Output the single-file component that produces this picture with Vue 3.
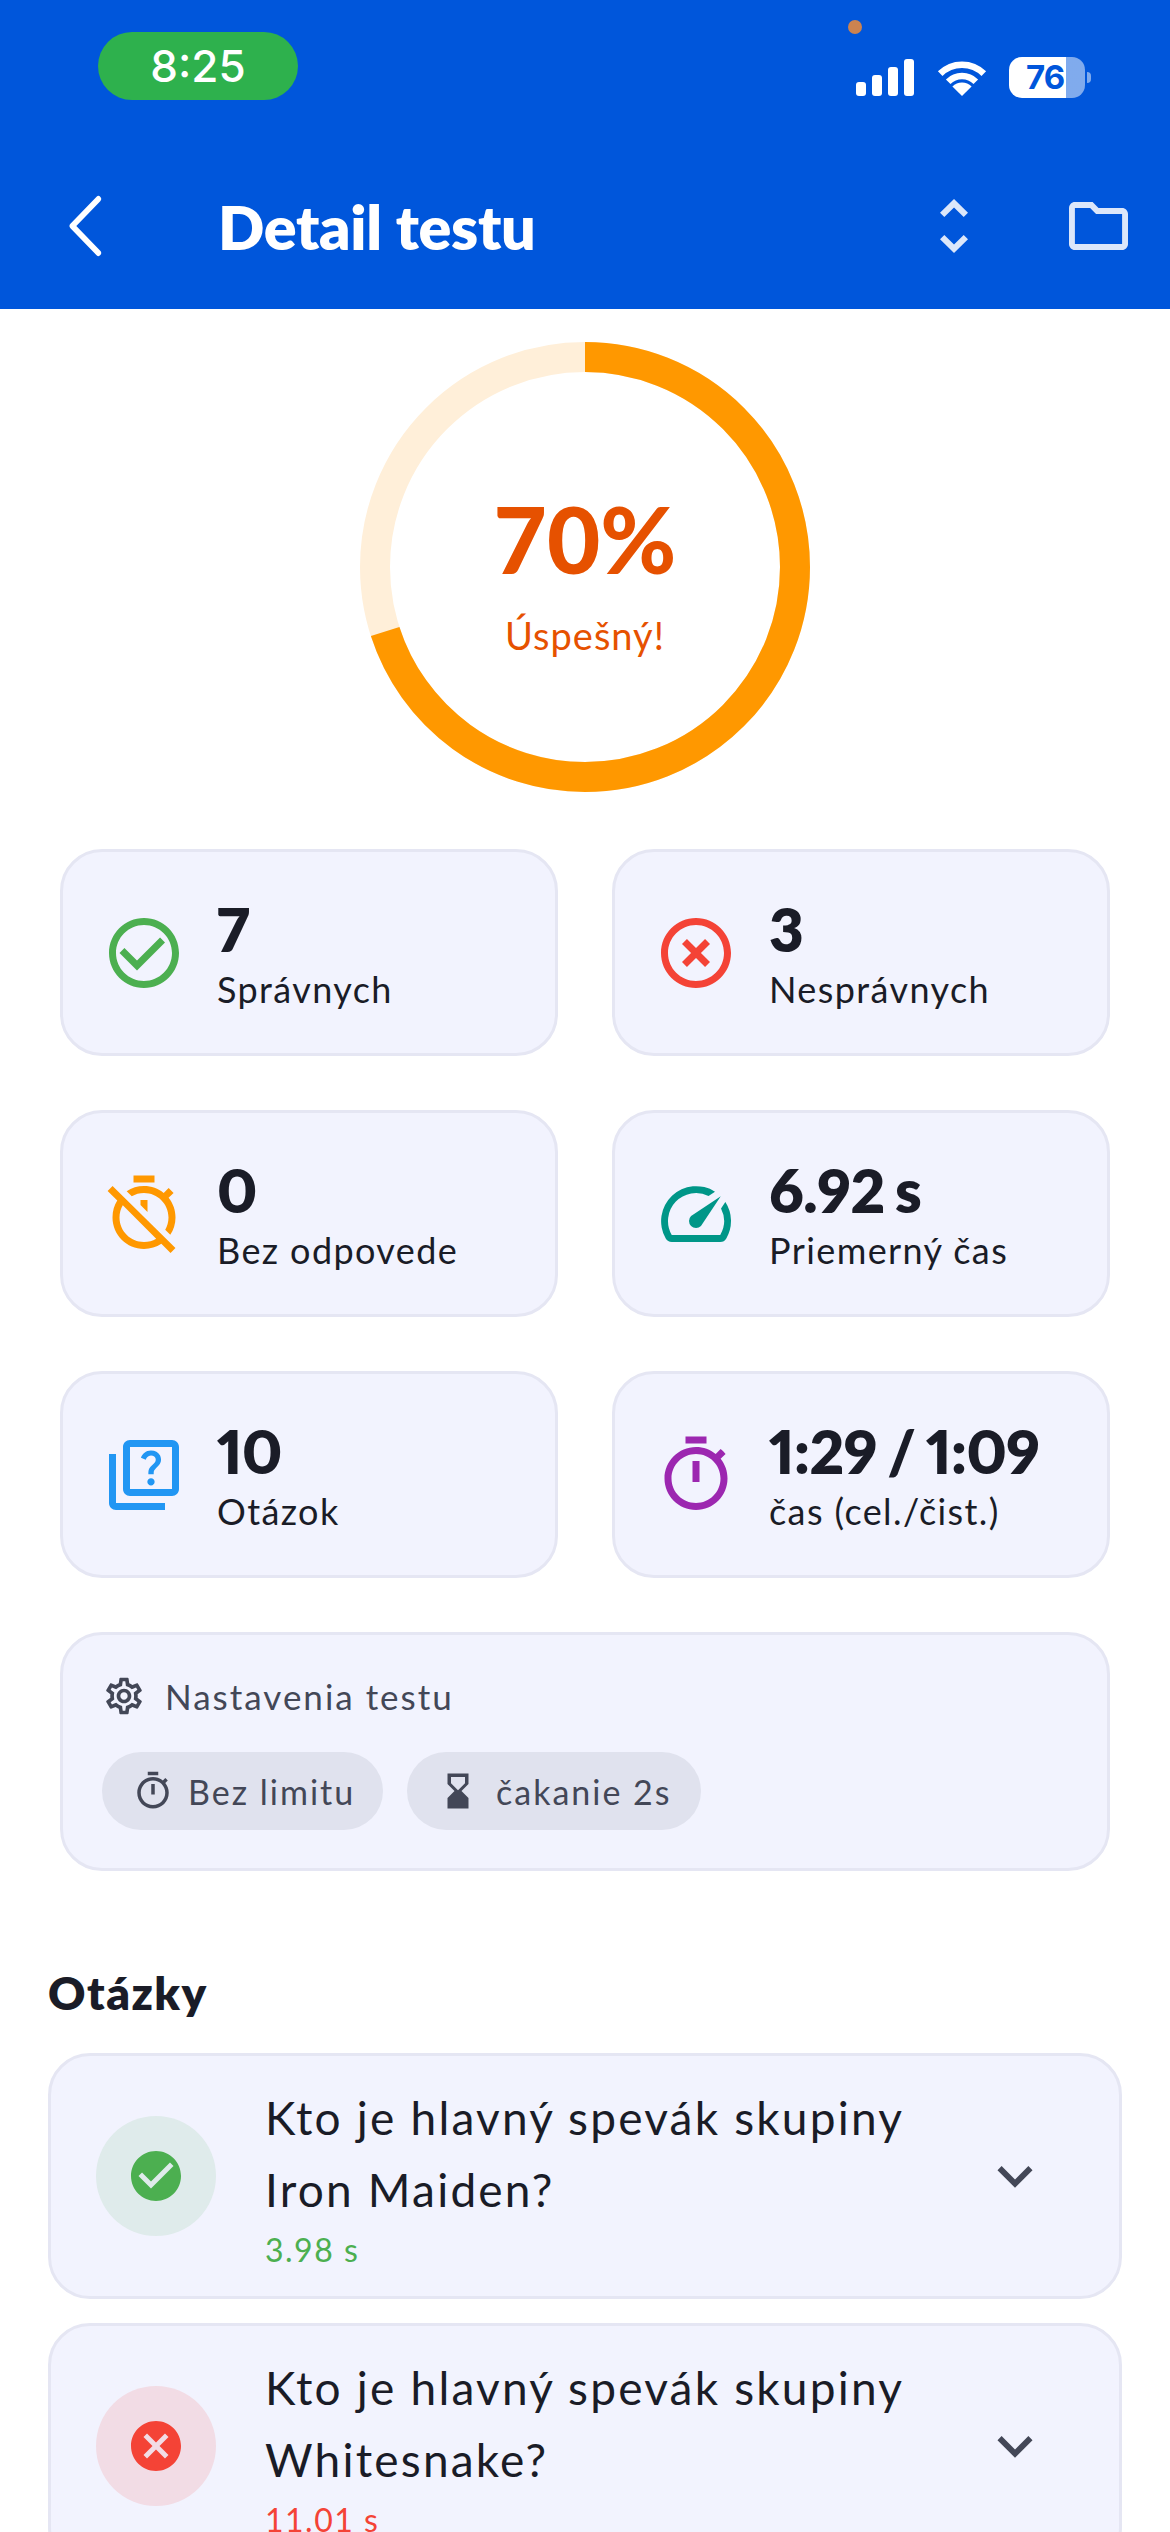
<script setup>
const ringRadius = 210;
const ringLength = 2 * Math.PI * ringRadius;
const ringDash = `${ringLength * 0.7} ${ringLength}`;

const stats = [
  {
    value: "7",
    label: "Správnych",
    color: "#4caf50",
    icon: "M16.59 7.58 10 14.17l-3.59-3.58L5 12l5 5 8-8zM12 2C6.48 2 2 6.48 2 12s4.48 10 10 10 10-4.48 10-10S17.52 2 12 2zm0 18c-4.42 0-8-3.58-8-8s3.58-8 8-8 8 3.58 8 8-3.58 8-8 8z",
  },
  {
    value: "3",
    label: "Nesprávnych",
    color: "#f44336",
    icon: "M14.59 8 12 10.59 9.41 8 8 9.41 10.59 12 8 14.59 9.41 16 12 13.41 14.59 16 16 14.59 13.41 12 16 9.41 14.59 8zM12 2C6.47 2 2 6.47 2 12s4.47 10 10 10 10-4.47 10-10S17.53 2 12 2zm0 18c-4.41 0-8-3.59-8-8s3.59-8 8-8 8 3.59 8 8-3.59 8-8 8z",
  },
  {
    value: "0",
    label: "Bez odpovede",
    color: "#ff9800",
    icon: "m19.04 4.55-1.42 1.42C16.07 4.74 14.12 4 12 4c-1.83 0-3.53.55-4.95 1.48l1.46 1.46C9.53 6.35 10.73 6 12 6c3.87 0 7 3.13 7 7 0 1.27-.35 2.47-.94 3.49l1.45 1.45C20.45 16.53 21 14.83 21 13c0-2.12-.74-4.07-1.97-5.61l1.42-1.42-1.41-1.42zM15 1H9v2h6V1zm-4 8.44 2 2V8h-2v1.44zM3.02 4 1.61 5.41l2.75 2.75C3.5 9.49 3 11.18 3 13c0 4.97 4.03 9 9 9 1.83 0 3.53-.55 4.95-1.48l2.63 2.63 1.41-1.41L3.02 4zM12 20c-3.87 0-7-3.13-7-7 0-1.27.35-2.47.94-3.49l9.54 9.54C14.47 19.65 13.27 20 12 20z",
  },
  {
    value: "6.92 s",
    label: "Priemerný čas",
    color: "#009688",
    icon: "m20.38 8.57-1.23 1.85a8 8 0 0 1-.22 7.58H5.07A8 8 0 0 1 15.58 6.85l1.85-1.23A10 10 0 0 0 3.35 19a2 2 0 0 0 1.72 1h13.85a2 2 0 0 0 1.74-1 10 10 0 0 0-.27-10.44zm-9.79 6.84a2 2 0 0 0 2.83 0l5.66-8.49-8.49 5.66a2 2 0 0 0 0 2.83z",
  },
  {
    value: "10",
    label: "Otázok",
    color: "#2196f3",
    icon: "M4 6H2v14c0 1.1.9 2 2 2h14v-2H4V6zm16-4H8c-1.1 0-2 .9-2 2v12c0 1.1.9 2 2 2h12c1.1 0 2-.9 2-2V4c0-1.1-.9-2-2-2zm0 14H8V4h12v12zm-6.49-5.84c.41-.73 1.18-1.16 1.63-1.8.48-.68.21-1.94-1.14-1.94-.88 0-1.32.67-1.5 1.23l-1.37-.57C11.51 5.96 12.52 5 13.99 5c1.23 0 2.08.56 2.51 1.26.37.6.58 1.73.01 2.57-.63.93-1.23 1.21-1.56 1.81-.13.24-.18.4-.18 1.18h-1.52c.01-.41-.06-1.08.26-1.66zm-.56 3.79c0-.59.47-1.04 1.05-1.04.59 0 1.04.45 1.04 1.04 0 .58-.44 1.05-1.04 1.05-.58 0-1.05-.47-1.05-1.05z",
  },
  {
    value: "1:29 / 1:09",
    label: "čas (cel./čist.)",
    color: "#9c27b0",
    icon: "M15 1H9v2h6V1zm-4 13h2V8h-2v6zm8.03-6.61 1.42-1.42c-.43-.51-.9-.99-1.41-1.41l-1.42 1.42C16.07 4.74 14.12 4 12 4c-4.97 0-9 4.03-9 9s4.02 9 9 9 9-4.03 9-9c0-2.12-.74-4.07-1.97-5.61zM12 20c-3.87 0-7-3.13-7-7s3.13-7 7-7 7 3.13 7 7-3.13 7-7 7z",
  },
];

const questions = [
  { lines: ["Kto je hlavný spevák skupiny", "Iron Maiden?"], time: "3.98 s", ok: true },
  { lines: ["Kto je hlavný spevák skupiny", "Whitesnake?"], time: "11.01 s", ok: false },
];

const checkPath =
  "M12 2C6.48 2 2 6.48 2 12s4.48 10 10 10 10-4.48 10-10S17.52 2 12 2zm-2 15-5-5 1.41-1.41L10 14.17l7.59-7.59L19 8l-9 9z";
const crossPath =
  "M12 2C6.47 2 2 6.47 2 12s4.47 10 10 10 10-4.47 10-10S17.53 2 12 2zm5 13.59L15.59 17 12 13.41 8.41 17 7 15.59 10.59 12 7 8.41 8.41 7 12 10.59 15.59 7 17 8.41 13.41 12 17 15.59z";
</script>

<template>
  <div class="page">
    <header class="header">
      <div class="status">
        <div class="clock">8:25</div>
        <span class="mic-dot"></span>
        <div class="status-icons">
          <div class="bars">
            <span class="bar bar1"></span>
            <span class="bar bar2"></span>
            <span class="bar bar3"></span>
            <span class="bar bar4"></span>
          </div>
          <svg class="wifi" width="50" height="37" viewBox="0 0 50 37">
            <path d="M3.2 14.6a31 31 0 0 1 43.6 0" fill="none" stroke="#fff" stroke-width="6.5" />
            <path d="M11.2 22.8a19.6 19.6 0 0 1 27.6 0" fill="none" stroke="#fff" stroke-width="6.5" />
            <path d="M25 37 15.4 27.4a13.6 13.6 0 0 1 19.2 0Z" fill="#fff" />
          </svg>
          <div class="battery">
            <div class="battery-body">76</div>
            <span class="battery-nub"></span>
          </div>
        </div>
      </div>
      <nav class="nav">
        <svg class="back" width="40" height="62" viewBox="0 0 40 62">
          <path d="M36 4 7 31l29 27" fill="none" stroke="#fff" stroke-width="6" stroke-linecap="round" stroke-linejoin="round" transform="translate(4 0) scale(.9 1)" />
        </svg>
        <h1 class="title">Detail testu</h1>
        <div class="nav-actions">
          <svg width="28" height="54" viewBox="7.41 3 9.17 18" preserveAspectRatio="none" fill="#dce7fa">
            <path d="M12 5.83 15.17 9l1.41-1.41L12 3 7.41 7.59 8.83 9 12 5.83zm0 12.34L8.83 15l-1.41 1.41L12 21l4.59-4.59L15.17 15 12 18.17z" />
          </svg>
          <svg width="59" height="48" viewBox="2 4 20 16" preserveAspectRatio="none" fill="#dce7fa">
            <path d="M9.17 6l2 2H20v10H4V6h5.17M10 4H4c-1.1 0-1.99.9-1.99 2L2 18c0 1.1.9 2 2 2h16c1.1 0 2-.9 2-2V8c0-1.1-.9-2-2-2h-8l-2-2z" />
          </svg>
        </div>
      </nav>
    </header>

    <section class="score">
      <svg class="ring" width="450" height="450" viewBox="0 0 450 450">
        <circle cx="225" cy="225" :r="ringRadius" fill="none" stroke="#ffefd9" stroke-width="30" />
        <circle
          cx="225"
          cy="225"
          :r="ringRadius"
          fill="none"
          stroke="#ff9800"
          stroke-width="30"
          :stroke-dasharray="ringDash"
          transform="rotate(-90 225 225)"
        />
      </svg>
      <div class="score-text">
        <div class="percent">70%</div>
        <div class="verdict">Úspešný!</div>
      </div>
    </section>

    <section class="stats">
      <div v-for="item in stats" :key="item.label" class="card stat">
        <svg width="84" height="84" viewBox="0 0 24 24" :fill="item.color">
          <path :d="item.icon" />
        </svg>
        <div class="stat-text">
          <div class="stat-value">{{ item.value }}</div>
          <div class="stat-label">{{ item.label }}</div>
        </div>
      </div>

      <div class="card settings">
        <div class="settings-head">
          <svg width="44" height="44" viewBox="0 0 24 24" fill="#434757">
            <path d="M19.43 12.98c.04-.32.07-.64.07-.98 0-.34-.03-.66-.07-.98l2.11-1.65c.19-.15.24-.42.12-.64l-2-3.46c-.09-.16-.26-.25-.44-.25-.06 0-.12.01-.17.03l-2.49 1c-.52-.4-1.08-.73-1.69-.98l-.38-2.65C14.46 2.18 14.25 2 14 2h-4c-.25 0-.46.18-.49.42l-.38 2.65c-.61.25-1.17.59-1.69.98l-2.49-1c-.06-.02-.12-.03-.18-.03-.17 0-.34.09-.43.25l-2 3.46c-.13.22-.07.49.12.64l2.11 1.65c-.04.32-.07.65-.07.98 0 .33.03.66.07.98l-2.11 1.65c-.19.15-.24.42-.12.64l2 3.46c.09.16.26.25.44.25.06 0 .12-.01.17-.03l2.49-1c.52.4 1.08.73 1.69.98l.38 2.65c.03.24.24.42.49.42h4c.25 0 .46-.18.49-.42l.38-2.65c.61-.25 1.17-.59 1.69-.98l2.49 1c.06.02.12.03.18.03.17 0 .34-.09.43-.25l2-3.46c.12-.22.07-.49-.12-.64l-2.11-1.65zm-1.98-1.71c.04.31.05.52.05.73 0 .21-.02.43-.05.73l-.14 1.13.89.7 1.08.84-.7 1.21-1.27-.51-1.04-.42-.9.68c-.43.32-.84.56-1.25.73l-1.06.43-.16 1.13-.2 1.35h-1.4l-.19-1.35-.16-1.13-1.06-.43c-.43-.18-.83-.41-1.23-.71l-.91-.7-1.06.43-1.27.51-.7-1.21 1.08-.84.89-.7-.14-1.13c-.03-.31-.05-.54-.05-.74s.02-.43.05-.73l.14-1.13-.89-.7-1.08-.84.7-1.21 1.27.51 1.04.42.9-.68c.43-.32.84-.56 1.25-.73l1.06-.43.16-1.13.2-1.35h1.39l.19 1.35.16 1.13 1.06.43c.43.18.83.41 1.23.71l.91.7 1.06-.43 1.27-.51.7 1.21-1.07.85-.89.7.14 1.13zM12 8c-2.21 0-4 1.79-4 4s1.79 4 4 4 4-1.79 4-4-1.79-4-4-4zm0 6c-1.1 0-2-.9-2-2s.9-2 2-2 2 .9 2 2-.9 2-2 2z" />
          </svg>
          <span>Nastavenia testu</span>
        </div>
        <div class="chips">
          <div class="chip chip-limit">
            <svg width="42" height="42" viewBox="0 0 24 24" fill="#434757">
              <path d="M15 1H9v2h6V1zm-4 13h2V8h-2v6zm8.03-6.61 1.42-1.42c-.43-.51-.9-.99-1.41-1.41l-1.42 1.42C16.07 4.74 14.12 4 12 4c-4.97 0-9 4.03-9 9s4.02 9 9 9 9-4.03 9-9c0-2.12-.74-4.07-1.97-5.61zM12 20c-3.87 0-7-3.13-7-7s3.13-7 7-7 7 3.13 7 7-3.13 7-7 7z" />
            </svg>
            <span>Bez limitu</span>
          </div>
          <div class="chip chip-wait">
            <svg width="42" height="42" viewBox="0 0 24 24" fill="#434757">
              <path d="m18 22-.01-6L14 12l3.99-4.01L18 2H6v6l4 4-4 3.99V22h12zM8 7.5V4h8v3.5l-4 4-4-4z" />
            </svg>
            <span>čakanie 2s</span>
          </div>
        </div>
      </div>
    </section>

    <section class="questions">
      <h2 class="questions-title">Otázky</h2>
      <div v-for="(q, i) in questions" :key="i" class="card question">
        <div class="q-badge" :class="q.ok ? 'q-badge-ok' : 'q-badge-bad'">
          <svg width="60" height="60" viewBox="0 0 24 24" :fill="q.ok ? '#4caf50' : '#f44336'">
            <path :d="q.ok ? checkPath : crossPath" />
          </svg>
        </div>
        <div class="q-text">
          <div v-for="line in q.lines" :key="line" class="q-line">{{ line }}</div>
          <div class="q-time" :class="q.ok ? 'time-ok' : 'time-bad'">{{ q.time }}</div>
        </div>
        <svg class="q-arrow" width="70" height="70" viewBox="0 0 24 24" fill="#434757">
          <path d="M7.41 8.59 12 13.17l4.59-4.58L18 10l-6 6-6-6 1.41-1.41z" />
        </svg>
      </div>
    </section>
  </div>
</template>

<style scoped>
.page {
  width: 1170px;
  height: 2532px;
  overflow: hidden;
  background: #fff;
  font-family: "Lato", "Noto Sans", sans-serif;
  color: #1a1c27;
}

.header {
  height: 309px;
  background: #0056db;
  color: #fff;
}

.status {
  position: relative;
  height: 143px;
  display: flex;
  justify-content: space-between;
  padding: 32px 79px 0 98px;
  box-sizing: border-box;
}

.clock {
  width: 200px;
  height: 68px;
  border-radius: 34px;
  background: #2eb14d;
  font-family: "Inter", sans-serif;
  font-size: 44px;
  font-weight: 500;
  line-height: 68px;
  text-align: center;
}

.mic-dot {
  position: absolute;
  left: 848px;
  top: 20px;
  width: 14px;
  height: 14px;
  border-radius: 50%;
  background: #cc8350;
}

.status-icons {
  display: flex;
  align-items: flex-start;
  margin-top: 25px;
}

.bars {
  display: flex;
  align-items: flex-end;
  gap: 6px;
  height: 37px;
  margin-top: 2px;
  margin-right: 23px;
}

.bar {
  width: 10px;
  border-radius: 3px;
  background: #fff;
}
.bar1 { height: 14px; }
.bar2 { height: 21px; }
.bar3 { height: 29px; }
.bar4 { height: 37px; }

.wifi {
  margin-top: 2px;
  margin-right: 22px;
}

.battery {
  display: flex;
  align-items: center;
  gap: 2px;
}

.battery-body {
  width: 76px;
  height: 41px;
  border-radius: 13px;
  padding-left: 17px;
  box-sizing: border-box;
  background: linear-gradient(90deg, #fff 75%, rgba(255, 255, 255, 0.5) 75%);
  color: #0056db;
  font-family: "Inter", sans-serif;
  font-size: 33px;
  font-weight: 700;
  letter-spacing: -1px;
  line-height: 41px;
}

.battery-nub {
  width: 4px;
  height: 11px;
  border-radius: 0 4px 4px 0;
  background: rgba(255, 255, 255, 0.5);
}

.nav {
  height: 166px;
  display: flex;
  align-items: center;
  padding: 0 42px 0 62px;
}

.back {
  margin-right: 116px;
}

.title {
  margin: 0;
  font-size: 61px;
  font-weight: 800;
  letter-spacing: -0.3px;
  line-height: 1;
}

.nav-actions {
  margin-left: auto;
  display: flex;
  align-items: center;
  gap: 101px;
}

.score {
  display: grid;
  justify-items: center;
  align-items: center;
  padding: 33px 0 57px;
}

.ring,
.score-text {
  grid-area: 1 / 1;
}

.score-text {
  text-align: center;
  color: #e65100;
  padding-top: 16px;
}

.percent {
  font-size: 92px;
  font-weight: 900;
  line-height: 96px;
}

.verdict {
  font-size: 38px;
  margin-top: 24px;
  line-height: 48px;
  letter-spacing: 1px;
}

.stats {
  display: grid;
  grid-template-columns: 1fr 1fr;
  gap: 54px;
  padding: 0 60px;
}

.card {
  box-sizing: border-box;
  background: #f2f3fe;
  border: 3px solid #e5e6f3;
  border-radius: 42px;
}

.stat {
  height: 207px;
  display: flex;
  align-items: center;
  gap: 31px;
  padding: 0 39px;
}

.stat-text {
  padding-top: 5px;
}

.stat-value {
  font-size: 60px;
  font-weight: 800;
  font-variant-numeric: proportional-nums;
  letter-spacing: -0.5px;
  word-spacing: -3px;
  line-height: 62px;
}

.stat-label {
  font-size: 36px;
  line-height: 48px;
  letter-spacing: 1.4px;
  margin-top: 5px;
}

.settings {
  grid-column: 1 / -1;
  height: 239px;
  padding: 39px 39px 0;
  color: #434757;
}

.settings-head {
  display: flex;
  align-items: center;
  gap: 19px;
  height: 44px;
  font-size: 35px;
  letter-spacing: 2px;
}

.chips {
  display: flex;
  gap: 24px;
  margin-top: 34px;
}

.chip {
  height: 78px;
  border-radius: 39px;
  background: #e0e2ee;
  display: flex;
  align-items: center;
  font-size: 34px;
  letter-spacing: 2px;
}

.chip-limit {
  width: 281px;
  padding-left: 30px;
  gap: 14px;
  box-sizing: border-box;
}

.chip-wait {
  width: 294px;
  padding-left: 30px;
  gap: 17px;
  box-sizing: border-box;
}

.questions {
  padding: 0 48px;
}

.questions-title {
  margin: 90px 0 0;
  height: 68px;
  font-size: 46px;
  font-weight: 800;
  letter-spacing: 1.5px;
  line-height: 64px;
}

.question {
  height: 246px;
  margin-top: 24px;
  display: flex;
  align-items: center;
  padding: 0 69px 0 45px;
}

.q-badge {
  width: 120px;
  height: 120px;
  flex: none;
  border-radius: 50%;
  display: flex;
  align-items: center;
  justify-content: center;
}
.q-badge-ok { background: #dfebeb; }
.q-badge-bad { background: #f2dce5; }

.q-text {
  margin-left: 49px;
  flex: 1;
}

.q-line {
  font-size: 46px;
  line-height: 72px;
  letter-spacing: 2.2px;
}

.q-time {
  font-size: 32px;
  line-height: 40px;
  letter-spacing: 1.5px;
  margin-top: 4px;
}
.time-ok { color: #4caf50; }
.time-bad { color: #f44336; }

.q-arrow {
  flex: none;
}
</style>

<style>
html,
body {
  margin: 0;
  background: #fff;
}
</style>
